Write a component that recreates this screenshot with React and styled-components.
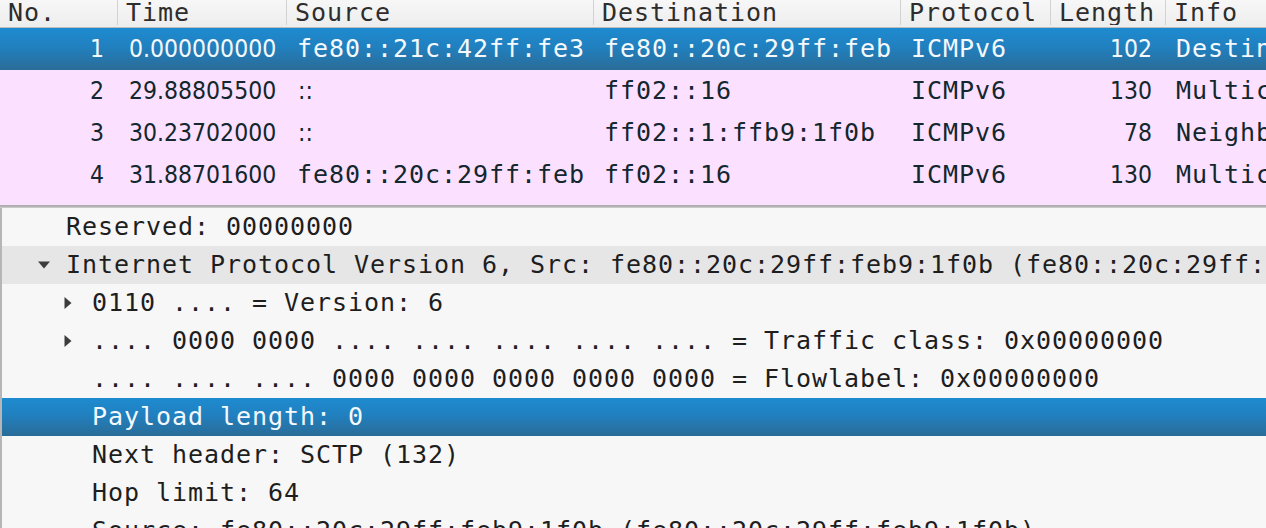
import React from "react";
import styled, { createGlobalStyle } from "styled-components";

const MONO = `"DejaVu Sans Mono", "Liberation Mono", monospace`;
const NARROW = `"DejaVu Sans Condensed", "DejaVu Sans", "Liberation Sans", sans-serif`;

const GlobalStyle = createGlobalStyle`
  html, body {
    margin: 0;
    padding: 0;
    background: #f7f7f7;
  }
  body {
    font-family: ${MONO};
  }
`;

const GRID = "117px 169px 307px 307px 150px 115px 1fr";

const columns = [
  { key: "no", title: "No.", align: "right" },
  { key: "time", title: "Time" },
  { key: "src", title: "Source" },
  { key: "dst", title: "Destination" },
  { key: "proto", title: "Protocol" },
  { key: "len", title: "Length", align: "right" },
  { key: "info", title: "Info" },
];

const packets = [
  {
    no: "1",
    time: "0.000000000",
    src: "fe80::21c:42ff:fe3",
    dst: "fe80::20c:29ff:feb",
    proto: "ICMPv6",
    len: "102",
    info: "Destination Unreachable (Port unreachable)",
    selected: true,
  },
  {
    no: "2",
    time: "29.88805500",
    src: "::",
    dst: "ff02::16",
    proto: "ICMPv6",
    len: "130",
    info: "Multicast Listener Report Message v2",
  },
  {
    no: "3",
    time: "30.23702000",
    src: "::",
    dst: "ff02::1:ffb9:1f0b",
    proto: "ICMPv6",
    len: "78",
    info: "Neighbor Solicitation for fe80::20c:29ff:feb9:1f0b",
  },
  {
    no: "4",
    time: "31.88701600",
    src: "fe80::20c:29ff:feb",
    dst: "ff02::16",
    proto: "ICMPv6",
    len: "130",
    info: "Multicast Listener Report Message v2",
  },
  {
    no: "5",
    time: "32.08807300",
    src: "fe80::20c:29ff:feb",
    dst: "ff02::1:ff00:1",
    proto: "ICMPv6",
    len: "86",
    info: "Neighbor Solicitation for fe80::1",
  },
];

const details = [
  { level: 1, text: "Reserved: 00000000" },
  {
    level: 1,
    text: "Internet Protocol Version 6, Src: fe80::20c:29ff:feb9:1f0b (fe80::20c:29ff:feb9:1f0b), Dst: fe80::21c:42ff:fe3c:9b1e",
    expander: "open",
    shaded: true,
  },
  { level: 2, text: "0110 .... = Version: 6", expander: "closed" },
  {
    level: 2,
    text: ".... 0000 0000 .... .... .... .... .... = Traffic class: 0x00000000",
    expander: "closed",
  },
  {
    level: 2,
    text: ".... .... .... 0000 0000 0000 0000 0000 = Flowlabel: 0x00000000",
  },
  { level: 2, text: "Payload length: 0", selected: true },
  { level: 2, text: "Next header: SCTP (132)" },
  { level: 2, text: "Hop limit: 64" },
  {
    level: 2,
    text: "Source: fe80::20c:29ff:feb9:1f0b (fe80::20c:29ff:feb9:1f0b)",
  },
];

// numbers (and the bare "::") are drawn in the narrow proportional face
const isNumeric = (v) => /^[0-9.:]+$/.test(v);

const SELECTED_BG = "linear-gradient(to bottom, #1d8bd0 0%, #2180bf 45%, #2a6c98 100%)";

const Window = styled.div`
  height: 528px;
  overflow: hidden;
  display: flex;
  flex-direction: column;
  background: #f7f7f7;
`;

const PacketList = styled.div`
  height: 205px;
  flex: none;
  overflow: hidden;
  background: #fce0ff;
`;

const HeaderRow = styled.div`
  display: grid;
  grid-template-columns: ${GRID};
  height: 27px;
  background: linear-gradient(to bottom, #f7f7f7, #ededed);
  border-bottom: 1px solid #bcbcbc;
`;

const HeaderCell = styled.div`
  padding-left: 8px;
  font-family: ${MONO};
  font-size: 25px;
  letter-spacing: 0.95px;
  line-height: 25px;
  color: #2d2d2d;
  white-space: nowrap;
  overflow: hidden;
  border-left: ${(p) => (p.$first ? "none" : "1px solid #d2d2d2")};
  margin-bottom: 2px;
`;

const PacketRow = styled.div`
  display: grid;
  grid-template-columns: ${GRID};
  height: 42px;
  background: ${(p) => (p.$selected ? SELECTED_BG : "#fce0ff")};
  color: ${(p) => (p.$selected ? "#f4f9fd" : "#12272e")};
`;

const Cell = styled.div`
  padding-left: ${(p) => (p.$align === "right" ? 0 : p.$narrow ? 12 : 11)}px;
  padding-right: ${(p) => (p.$align === "right" ? 13 : 0)}px;
  text-align: ${(p) => p.$align || "left"};
  line-height: 42px;
  white-space: nowrap;
  overflow: hidden;
  font-family: ${(p) => (p.$narrow ? NARROW : MONO)};
  font-stretch: ${(p) => (p.$narrow ? "condensed" : "normal")};
  font-size: ${(p) => (p.$narrow ? "24.5px" : "25px")};
  letter-spacing: ${(p) => (p.$narrow ? "0" : "0.95px")};
`;

const Splitter = styled.div`
  height: 3px;
  flex: none;
  background: linear-gradient(to bottom, #a9a9a9, #b8b8b8 66%, #d9d9d9);
`;

const DetailPane = styled.div`
  flex: 1;
  overflow: hidden;
  border-left: 2px solid #b6b6b6;
  background: #f7f7f7;
`;

const TreeRow = styled.div`
  display: flex;
  align-items: center;
  height: 38px;
  padding-left: ${(p) => 34 + (p.$level - 1) * 26}px;
  background: ${(p) =>
    p.$selected ? SELECTED_BG : p.$shaded ? "#e6e6e6" : "transparent"};
  color: ${(p) => (p.$selected ? "#f4f9fd" : "#1e1e1e")};
`;

const Expander = styled.span`
  flex: none;
  width: 30px;
  height: 38px;
  display: flex;
  align-items: center;
  padding-left: 2px;
  box-sizing: border-box;
  color: #3c3c3c;
`;

const TreeText = styled.span`
  font-family: ${MONO};
  font-size: 25px;
  letter-spacing: 0.95px;
  line-height: 38px;
  white-space: nowrap;
`;

const Arrow = ({ state }) =>
  state === "open" ? (
    <svg width="12" height="8" viewBox="0 0 12 8">
      <polygon points="0,0.5 12,0.5 6,7.5" fill="currentColor" />
    </svg>
  ) : (
    <svg width="8" height="12" viewBox="0 0 8 12">
      <polygon points="0.5,0 7.5,6 0.5,12" fill="currentColor" />
    </svg>
  );

export default function App() {
  return (
    <>
      <GlobalStyle />
      <Window>
        <PacketList>
          <HeaderRow>
            {columns.map((c, i) => (
              <HeaderCell key={c.key} $first={i === 0}>
                {c.title}
              </HeaderCell>
            ))}
          </HeaderRow>
          {packets.map((p) => (
            <PacketRow key={p.no} $selected={p.selected}>
              {columns.map((c) => (
                <Cell key={c.key} $align={c.align} $narrow={isNumeric(p[c.key])}>
                  {p[c.key]}
                </Cell>
              ))}
            </PacketRow>
          ))}
        </PacketList>
        <Splitter />
        <DetailPane>
          {details.map((d, i) => (
            <TreeRow
              key={i}
              $level={d.level}
              $selected={d.selected}
              $shaded={d.shaded}
            >
              <Expander>{d.expander && <Arrow state={d.expander} />}</Expander>
              <TreeText>{d.text}</TreeText>
            </TreeRow>
          ))}
        </DetailPane>
      </Window>
    </>
  );
}
